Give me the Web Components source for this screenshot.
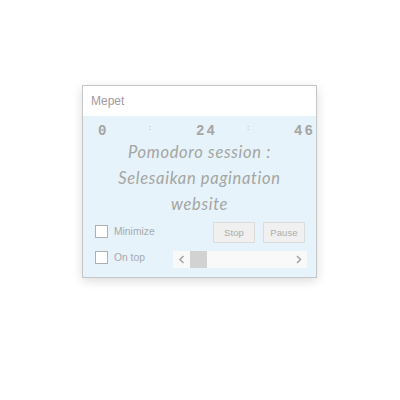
<!DOCTYPE html>
<html><head><meta charset="utf-8"><style>
html,body{margin:0;padding:0;background:#fff}
body{width:400px;height:400px;padding:85px 0 0 82px;box-sizing:border-box}
</style></head><body>
<pomo-window title-text="Mepet">
  <pomo-timer></pomo-timer>
  <pomo-message>Pomodoro session :<br>Selesaikan pagination<br>website</pomo-message>
  <pomo-controls></pomo-controls>
</pomo-window>
<script>
function el(name,css,html){customElements.define(name,class extends HTMLElement{connectedCallback(){if(this.shadowRoot)return;const r=this.attachShadow({mode:'open'});r.innerHTML='<style>'+css+'</style>'+(typeof html==='function'?html(this):html)}})}
el('pomo-window',`:host{display:block;width:235px;height:193px;box-sizing:border-box;border:1px solid #c4c6c7;background:#e6f3fb;box-shadow:0 3px 10px rgba(0,0,0,.14);font-family:"Liberation Sans",sans-serif}
.t{height:30px;background:#fff;color:#a39a9e;font-size:12px;line-height:30px;padding-left:8px}
.b{height:161px;display:flex;flex-direction:column;overflow:hidden}`,h=>`<div class="t">${h.getAttribute('title-text')}</div><div class="b"><slot></slot></div>`);
el('pomo-timer',`:host{display:grid;grid-template-columns:repeat(5,49px);height:23px;padding:4px 0 0 15px;margin-bottom:-1px;align-items:center;font:bold 14px/23px "Liberation Mono",monospace;color:#a5a5a2;letter-spacing:2px;flex:none}
.c{font-size:7px;font-weight:normal;color:#b5b8ba;letter-spacing:0;padding-left:0;margin:-7px 0 0 1px}`,`<span>0</span><span class="c">:</span><span>24</span><span class="c">:</span><span>46</span>`);
el('pomo-message',`:host{display:block;flex:none;height:78px;text-align:center;font:italic 16.5px/26px "Lato",sans-serif;color:#a5a5a1;letter-spacing:.68px;margin-top:-3px;white-space:nowrap}`,`<slot></slot>`);
el('pomo-check',`:host{display:flex;align-items:center;gap:6px;font:10.3px "Liberation Sans",sans-serif;color:#a7aaae}
i{display:block;width:11px;height:11px;border:1px solid #adb0b2;background:#fff}`,`<i></i><slot></slot>`);
el('pomo-btn',`:host{display:flex;align-items:center;justify-content:center;width:40px;height:19px;border:1px solid #dcdcdc;background:#f0f0f0;font:9.5px "Liberation Sans",sans-serif;color:#acacac;letter-spacing:.1px}`,`<slot></slot>`);
el('pomo-scroll',`:host{display:flex;align-items:center;width:134px;height:17px;background:#f9f9f9}
.th{width:17px;height:17px;background:#d2d2d2}.sp{flex:1}
svg{display:block;width:17px;height:17px}`,`<svg viewBox="0 0 17 17"><path d="M10.5 5 7 8.5l3.5 3.5" fill="none" stroke="#a5a5a5" stroke-width="1.6"/></svg><div class="th"></div><div class="sp"></div><svg viewBox="0 0 17 17"><path d="M7 5l3.5 3.5L7 12" fill="none" stroke="#a5a5a5" stroke-width="1.6"/></svg>`);
el('pomo-controls',`:host{display:grid;flex:none;grid-template-columns:auto 1fr;row-gap:8px;padding:5px 11px 0 12px;align-items:start}
.a{display:flex;gap:8px;justify-content:flex-end}.s{justify-self:end;margin-right:-2px}.m{margin-top:3px}`,`<pomo-check class="m">Minimize</pomo-check><div class="a"><pomo-btn>Stop</pomo-btn><pomo-btn>Pause</pomo-btn></div><pomo-check>On top</pomo-check><pomo-scroll class="s"></pomo-scroll>`);
</script>
</body></html>
